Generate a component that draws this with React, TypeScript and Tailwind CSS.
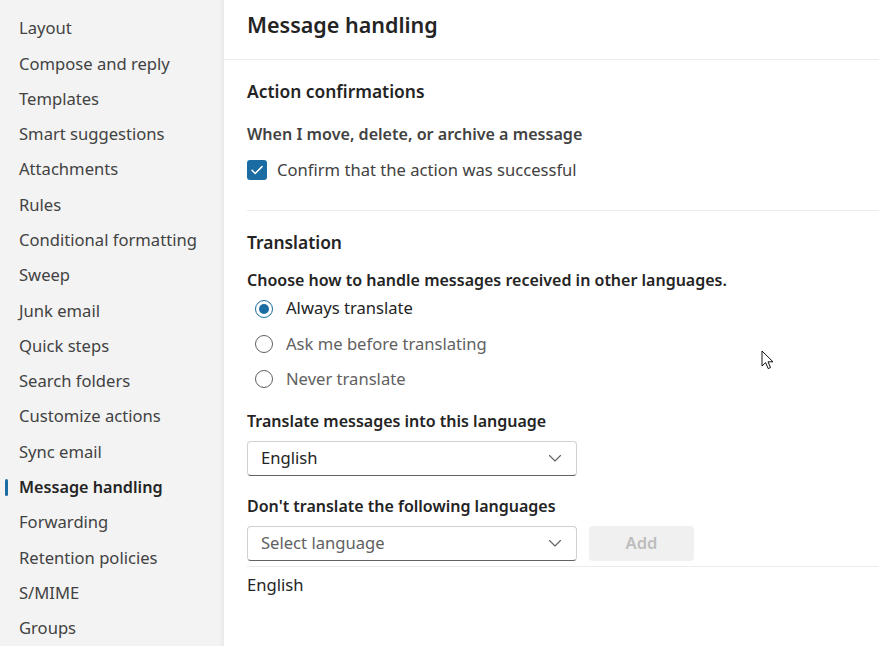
import React from 'react';

const navItems = [
  'Layout',
  'Compose and reply',
  'Templates',
  'Smart suggestions',
  'Attachments',
  'Rules',
  'Conditional formatting',
  'Sweep',
  'Junk email',
  'Quick steps',
  'Search folders',
  'Customize actions',
  'Sync email',
  'Message handling',
  'Forwarding',
  'Retention policies',
  'S/MIME',
  'Groups',
];

const radios = [
  { label: 'Always translate', checked: true },
  { label: 'Ask me before translating', checked: false },
  { label: 'Never translate', checked: false },
];

function Chevron() {
  return (
    <svg width="16" height="16" viewBox="0 0 16 16" fill="none">
      <path d="M2.5 5.5L8 11l5.5-5.5" stroke="#616161" strokeWidth="1.1" strokeLinecap="round" strokeLinejoin="round" />
    </svg>
  );
}

function Dropdown({ value, placeholder }: { value: string; placeholder?: boolean }) {
  return (
    <div className="flex h-[35px] w-[330px] items-center justify-between rounded-[4px] border border-[#d1d1d1] border-b-[#616161] pl-[13px] pr-[13px]">
      <span className={placeholder ? 'text-[#616161]' : 'text-[#242424]'}>{value}</span>
      <Chevron />
    </div>
  );
}

export default function App() {
  return (
    <div
      className="relative flex h-[646px] w-[879px] overflow-hidden bg-white text-[16.6px] text-[#242424]"
      style={{ fontFamily: '"Noto Sans", "Open Sans", sans-serif' }}
    >
      {/* Sidebar */}
      <div className="w-[224px] shrink-0 bg-[#f3f3f3] pt-[11px] shadow-[inset_-6px_0_6px_-6px_rgba(0,0,0,0.08)]">
        {navItems.map((item) => {
          const active = item === 'Message handling';
          return (
            <div key={item} className="relative flex h-[35.3px] items-center pl-[19px]">
              {active && <span className="absolute left-[5px] top-[9px] h-[17px] w-[3px] rounded-full bg-[#1a6ca3]" />}
              <span className={active ? 'text-[16.2px] font-semibold text-[#242424]' : 'text-[#424242]'}>{item}</span>
            </div>
          );
        })}
      </div>

      {/* Main */}
      <div className="flex-1">
        <div className="flex h-[60px] items-center border-b border-[#ebebeb] pl-[23px]">
          <h1 className="pb-[9px] text-[21.5px] font-semibold text-[#242424]">Message handling</h1>
        </div>

        <div className="pl-[23px]">
          <div className="mt-[19px] text-[17.4px] leading-[24px] font-semibold">Action confirmations</div>
          <div className="mt-[19px] text-[16.1px] leading-[24px] font-semibold text-[#424242]">
            When I move, delete, or archive a message
          </div>
          <label className="mt-[12px] flex h-[24px] items-center gap-[10px] text-[#424242]">
            <span className="flex h-[20px] w-[20px] items-center justify-center rounded-[3px] bg-[#1a6ca3]">
              <svg width="14" height="14" viewBox="0 0 14 14" fill="none">
                <path d="M2 7.3l3.2 3.2L12 3.6" stroke="white" strokeWidth="1.5" strokeLinecap="round" strokeLinejoin="round" />
              </svg>
            </span>
            Confirm that the action was successful
          </label>

          <div className="mt-[28px] h-px bg-[#ebebeb]" />

          <div className="mt-[19px] text-[17.4px] leading-[24px] font-semibold">Translation</div>
          <div className="mt-[14px] text-[16px] leading-[24px] font-semibold">
            Choose how to handle messages received in other languages.
          </div>
          <div className="-mt-[1px]">
            {radios.map((r) => (
              <div key={r.label} className="flex h-[35.3px] items-center gap-[13px] pl-[8px]">
                <span
                  className={`flex h-[18px] w-[18px] items-center justify-center rounded-full border ${
                    r.checked ? 'border-[#1a6ca3]' : 'border-[#616161]'
                  }`}
                >
                  {r.checked && <span className="h-[10px] w-[10px] rounded-full bg-[#1a6ca3]" />}
                </span>
                <span className={r.checked ? 'text-[#242424]' : 'text-[#616161]'}>{r.label}</span>
              </div>
            ))}
          </div>

          <div className="mt-[12px] text-[16px] leading-[24px] font-semibold">Translate messages into this language</div>
          <div className="mt-[8px]">
            <Dropdown value="English" />
          </div>

          <div className="mt-[18px] text-[16px] leading-[24px] font-semibold">Don't translate the following languages</div>
          <div className="mt-[8px] flex items-center gap-[12px]">
            <Dropdown value="Select language" placeholder />
            <button className="h-[35px] w-[105px] rounded-[4px] bg-[#f0f0f0] font-semibold text-[#bdbdbd]">Add</button>
          </div>
          <div className="mt-[5px] h-px bg-[#ebebeb]" />
          <div className="mt-[6px] leading-[24px] text-[#242424]">English</div>
        </div>
      </div>

      {/* Mouse pointer */}
      <svg className="absolute left-[761px] top-[350px]" width="14" height="21" viewBox="0 0 14 21">
        <path d="M1 1v15l3.6-3.4 2.6 6 2.3-1-2.5-5.8H12z" fill="white" stroke="#111" strokeWidth="1" strokeLinejoin="round" />
      </svg>
    </div>
  );
}
